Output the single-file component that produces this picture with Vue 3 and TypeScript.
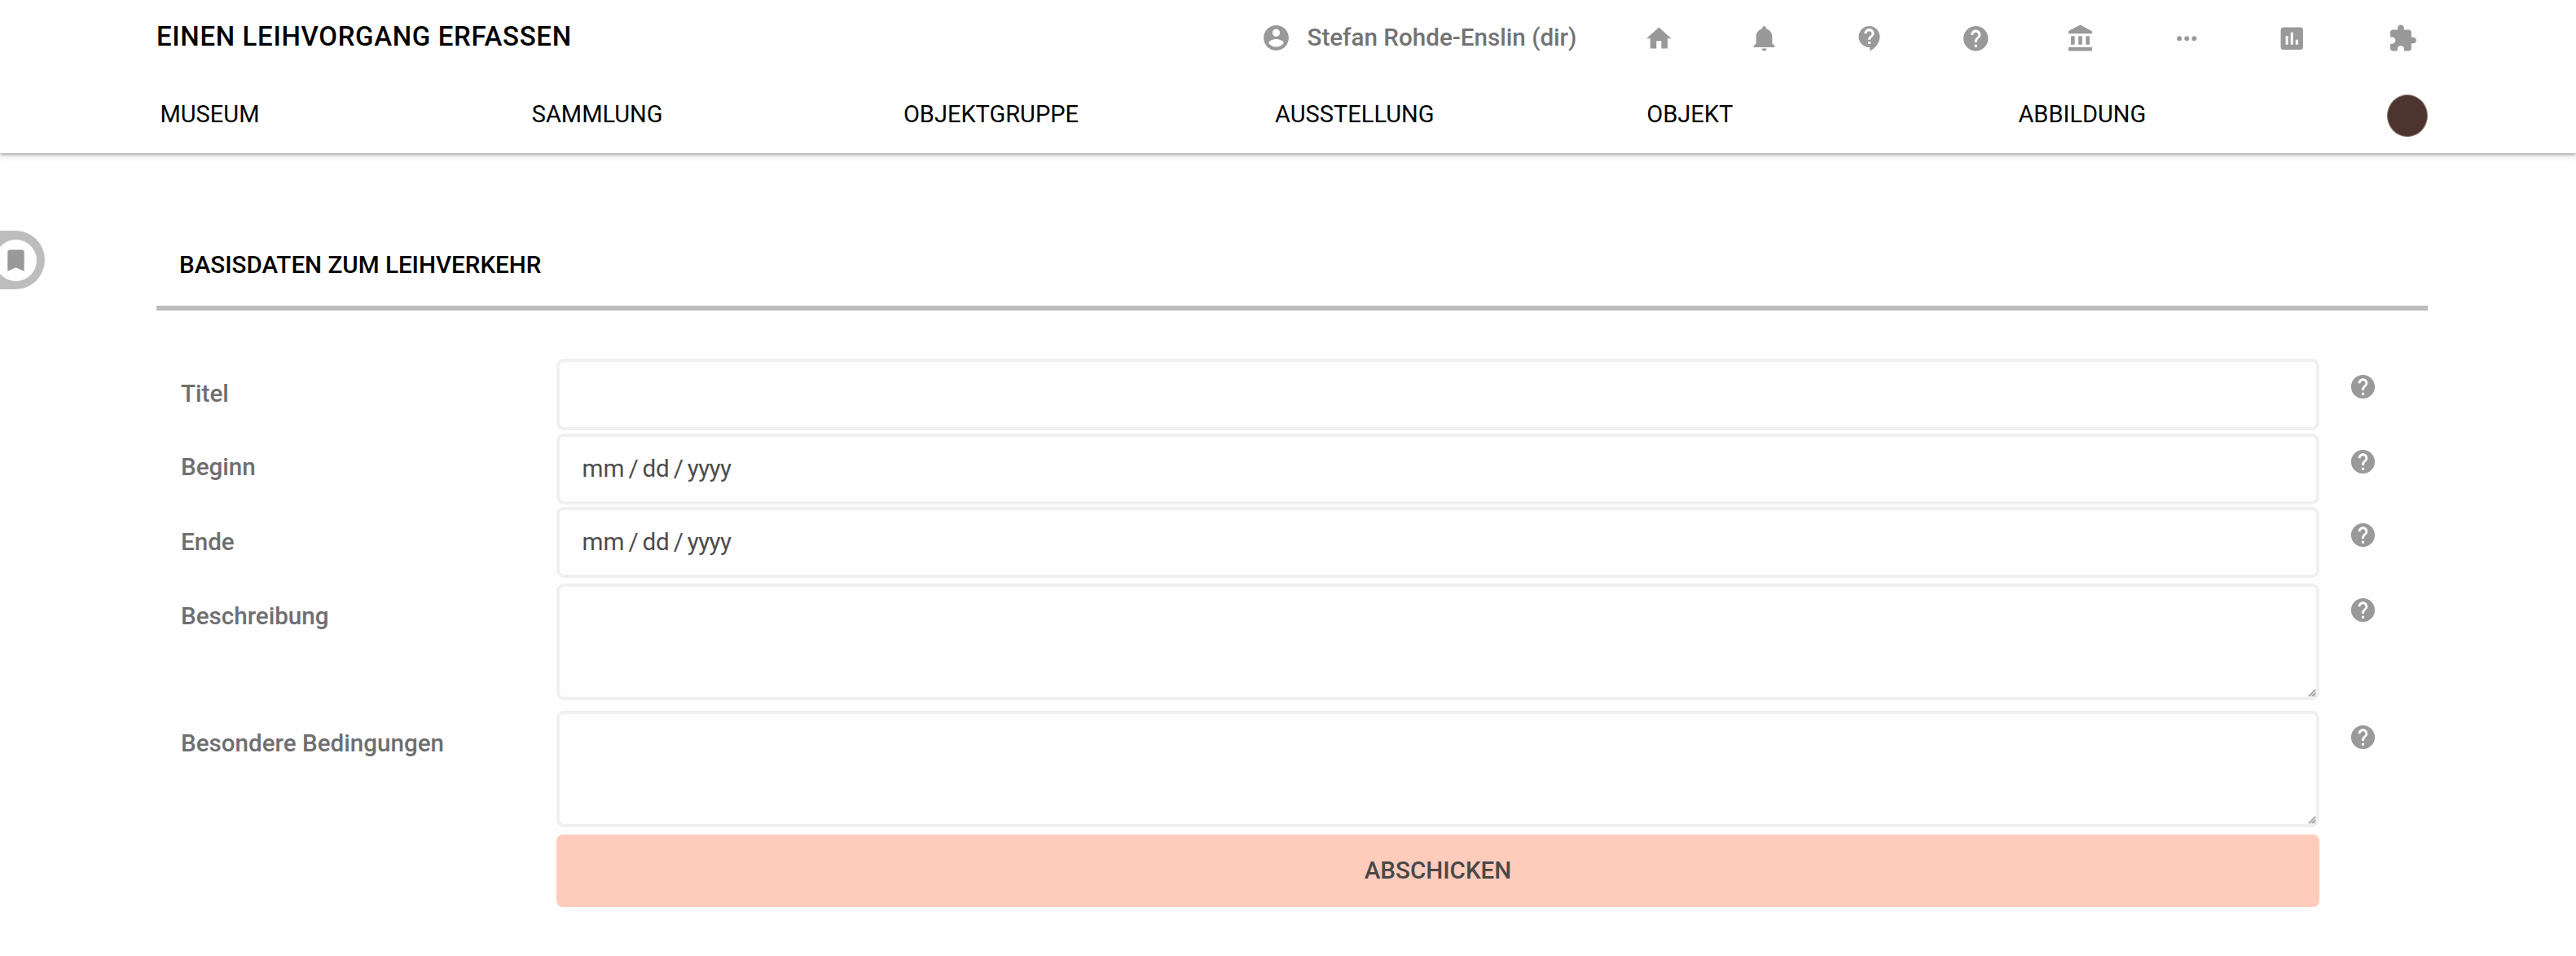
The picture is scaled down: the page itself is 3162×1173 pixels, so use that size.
<script setup lang="ts">
interface NavIcon {
  name: string
  path: string
}

interface Field {
  key: string
  label: string
  kind: 'text' | 'date' | 'area'
}

const helpPath =
  'M12 2C6.48 2 2 6.48 2 12s4.48 10 10 10 10-4.48 10-10S17.52 2 12 2zm1 17h-2v-2h2v2zm2.07-7.75l-.9.92C13.45 12.9 13 13.5 13 15h-2v-.5c0-1.1.45-2.1 1.17-2.83l1.24-1.26c.37-.36.59-.86.59-1.41 0-1.1-.9-2-2-2s-2 .9-2 2H8c0-2.21 1.79-4 4-4s4 1.79 4 4c0 .88-.36 1.68-.93 2.25z'

const personPath =
  'M12 2C6.48 2 2 6.48 2 12s4.48 10 10 10 10-4.48 10-10S17.52 2 12 2zm0 3c1.66 0 3 1.34 3 3s-1.34 3-3 3-3-1.34-3-3 1.34-3 3-3zm0 14.2c-2.5 0-4.71-1.28-6-3.22.03-1.99 4-3.08 6-3.08 1.99 0 5.97 1.09 6 3.08-1.29 1.94-3.5 3.22-6 3.22z'

const navIcons: NavIcon[] = [
  { name: 'home', path: 'M10 20v-6h4v6h5v-8h3L12 3 2 12h3v8z' },
  {
    name: 'notifications',
    path: 'M11.5 22c1.1 0 2-.9 2-2h-4c0 1.1.9 2 2 2zm6.5-6v-5.5c0-3.07-2.13-5.64-5-6.32V3.5c0-.83-.67-1.5-1.5-1.5S10 2.67 10 3.5v.68c-2.87.68-5 3.25-5 6.32V16l-2 2v1h17v-1l-2-2z',
  },
  {
    name: 'contact',
    path: 'M11.5 2C6.81 2 3 5.81 3 10.5S6.81 19 11.5 19h.5v3c4.86-2.34 8-7 8-11.5C20 5.81 16.19 2 11.5 2zm1 14.5h-2v-2h2v2zm0-3.5h-2c0-3.25 3-3 3-5 0-1.1-.9-2-2-2s-2 .9-2 2h-2c0-2.21 1.79-4 4-4s4 1.79 4 4c0 2.5-3 2.75-3 5z',
  },
  { name: 'support', path: helpPath },
  {
    name: 'institution',
    path: 'M4 10v7h3v-7H4zm6 0v7h3v-7h-3zM2 22h19v-3H2v3zm14-12v7h3v-7h-3zm-4.5-9L2 6v2h19V6l-9.5-5z',
  },
  {
    name: 'more',
    path: 'M6 10c-1.1 0-2 .9-2 2s.9 2 2 2 2-.9 2-2-.9-2-2-2zm12 0c-1.1 0-2 .9-2 2s.9 2 2 2 2-.9 2-2-.9-2-2-2zm-6 0c-1.1 0-2 .9-2 2s.9 2 2 2 2-.9 2-2-.9-2-2-2z',
  },
  {
    name: 'statistics',
    path: 'M19 3H5c-1.1 0-2 .9-2 2v14c0 1.1.9 2 2 2h14c1.1 0 2-.9 2-2V5c0-1.1-.9-2-2-2zM9 17H7v-7h2v7zm4 0h-2V7h2v10zm4 0h-2v-4h2v4z',
  },
  {
    name: 'extension',
    path: 'M20.5 11H19V7c0-1.1-.9-2-2-2h-4V3.5C13 2.12 11.88 1 10.5 1S8 2.12 8 3.5V5H4c-1.1 0-1.99.9-1.99 2v3.8H3.5c1.49 0 2.7 1.21 2.7 2.7s-1.21 2.7-2.7 2.7H2V20c0 1.1.9 2 2 2h3.8v-1.5c0-1.49 1.21-2.7 2.7-2.7 1.49 0 2.7 1.21 2.7 2.7V22H17c1.1 0 2-.9 2-2v-4h1.5c1.38 0 2.5-1.12 2.5-2.5S21.88 11 20.5 11z',
  },
]

const menu = ['Museum', 'Sammlung', 'Objektgruppe', 'Ausstellung', 'Objekt', 'Abbildung']

const fields: Field[] = [
  { key: 'title', label: 'Titel', kind: 'text' },
  { key: 'begin', label: 'Beginn', kind: 'date' },
  { key: 'end', label: 'Ende', kind: 'date' },
  { key: 'description', label: 'Beschreibung', kind: 'area' },
  { key: 'conditions', label: 'Besondere Bedingungen', kind: 'area' },
]
</script>

<template>
  <div class="page">
    <header class="header">
      <div class="topbar">
        <h1 class="page-title">Einen Leihvorgang erfassen</h1>
        <div class="user">
          <svg class="user-icon" viewBox="0 0 24 24"><path :d="personPath" /></svg>
          <span class="user-name">Stefan Rohde-Enslin (dir)</span>
        </div>
        <nav class="icons">
          <a v-for="icon in navIcons" :key="icon.name" class="icon-link" :class="icon.name">
            <svg viewBox="0 0 24 24"><path :d="icon.path" /></svg>
          </a>
        </nav>
      </div>
      <nav class="menu">
        <a v-for="entry in menu" :key="entry" class="menu-entry">{{ entry }}</a>
        <span class="avatar"></span>
      </nav>
    </header>

    <aside class="bookmark">
      <span class="bookmark-disc">
        <svg viewBox="0 0 24 24"><path d="M17 3H7c-1.1 0-2 .9-2 2v16l7-3 7 3V5c0-1.1-.9-2-2-2z" /></svg>
      </span>
    </aside>

    <main class="content">
      <h2 class="section-title">Basisdaten zum Leihverkehr</h2>
      <form class="form">
        <div v-for="field in fields" :key="field.key" class="row" :class="field.key">
          <label class="label">{{ field.label }}</label>
          <div class="control" :class="field.kind">
            <template v-if="field.kind === 'date'">
              <span>mm</span><i>/</i><span>dd</span><i>/</i><span class="year">yyyy</span>
            </template>
            <svg v-if="field.kind === 'area'" class="grip" viewBox="0 0 12 12">
              <path d="M1 11.5L11.5 1V11.5z" fill="#d2d2d2" />
              <path d="M2 11L11 2M7 11L11 7" stroke="#929292" stroke-width="1.3" />
            </svg>
          </div>
          <svg class="help" viewBox="0 0 24 24"><path :d="helpPath" /></svg>
        </div>
        <div class="row submit">
          <button type="button" class="submit-button">Abschicken</button>
        </div>
      </form>
    </main>
  </div>
</template>

<style>
body {
  background: #fefefe;
}
</style>

<style scoped>
.page {
  position: relative;
  height: 1173px;
  overflow: hidden;
  background: #fefefe;
  color: #000;
  font-family: Roboto, sans-serif;
  font-size: 29.6px;
}

svg {
  display: block;
  fill: #999;
}

/* Header */
.header {
  height: 188px;
  padding: 0 182px 0 192px;
  box-sizing: border-box;
  background: #fefefe;
  box-shadow: 0 2px 3px rgba(0, 0, 0, 0.24), 0 3px 8px rgba(0, 0, 0, 0.14);
}

.topbar {
  display: flex;
  height: 94px;
}

.page-title {
  width: 1356px;
  margin: 0;
  font-size: 33px;
  font-weight: 500;
  line-height: 90px;
  letter-spacing: 0.66px;
  text-transform: uppercase;
}

.user {
  display: flex;
  width: 423px;
  color: #737373;
  font-weight: 500;
}

.user-icon {
  width: 37px;
  height: 37px;
  margin: 28px 19.5px 0 0;
}

.user-name {
  line-height: 92px;
  white-space: nowrap;
}

.icons {
  display: flex;
  padding-left: 47px;
}

.icon-link {
  width: 36.5px;
  margin: 29px 93px 0 0;
}

.icon-link svg {
  width: 36.5px;
  height: 36.5px;
}

.icon-link.extension {
  margin-left: 6px;
  margin-right: 0;
}

.menu {
  display: flex;
  height: 94px;
  padding-left: 4.5px;
  font-size: 29px;
}

.menu-entry {
  flex: 0 0 456.2px;
  line-height: 92px;
  text-transform: uppercase;
}

.avatar {
  box-sizing: border-box;
  flex: none;
  width: 50px;
  height: 52px;
  margin: 21.5px 0 0 -4px;
  border: 1.5px solid #88756f;
  border-radius: 50%;
  background: #4e342e;
}

/* Bookmark tab docked over the left edge of the page */
.bookmark {
  position: absolute;
  top: 283px;
  left: 0;
  width: 55px;
  height: 72px;
  border-radius: 0 36px 36px 0;
  background: #bdbdbd;
  overflow: hidden;
}

.bookmark-disc {
  display: flex;
  align-items: center;
  justify-content: center;
  width: 51px;
  height: 51px;
  margin: 10.5px 0 0 -6px;
  border-radius: 50%;
  background: #fefefe;
}

.bookmark-disc svg {
  width: 35px;
  height: 35px;
}

/* Form */
.content {
  width: 2788px;
  margin-left: 192px;
  padding-top: 92px;
}

.section-title {
  box-sizing: border-box;
  height: 101px;
  margin: 0 0 59px;
  padding: 0 28px;
  border-bottom: 6px solid #bdbdbd;
  font-size: 29.6px;
  font-weight: 500;
  line-height: 90px;
  text-transform: uppercase;
}

.row {
  display: grid;
  grid-template-columns: 491px 2164px auto;
  align-items: start;
  height: 92px;
}

.row.begin {
  height: 90px;
}

.row.end {
  height: 94px;
}

.row.description {
  height: 156px;
}

.row.conditions {
  height: 152px;
}

.label {
  padding-left: 30px;
  color: #6f6f6f;
  font-weight: 500;
  line-height: 87px;
}

.begin .label {
  line-height: 83px;
}

.description .label,
.conditions .label {
  line-height: 80px;
}

.control {
  position: relative;
  display: flex;
  box-sizing: border-box;
  height: 88px;
  border: 4px solid #f0f0f0;
  border-radius: 9px;
  background: #fefefe;
}

.control.date {
  height: 87px;
  padding-left: 27.5px;
  color: #4d4d4d;
  line-height: 79px;
}

.control.date i {
  width: 11px;
  margin: 0 6px 0 5px;
  font-style: normal;
}

.control.date .year {
  letter-spacing: -0.6px;
}

.control.area {
  height: 143px;
}

.grip {
  position: absolute;
  right: 0;
  bottom: 0;
  width: 11px;
  height: 11px;
}

.help {
  width: 35px;
  height: 35px;
  margin: 17px 0 0 36px;
}

.description .help,
.conditions .help {
  margin-top: 14.5px;
}

.submit-button {
  grid-column: 2;
  height: 89px;
  padding: 0;
  border: 0;
  border-radius: 8px;
  background: #ffccbc;
  color: #484848;
  font: 500 29.6px/87px Roboto, sans-serif;
  text-transform: uppercase;
}
</style>
